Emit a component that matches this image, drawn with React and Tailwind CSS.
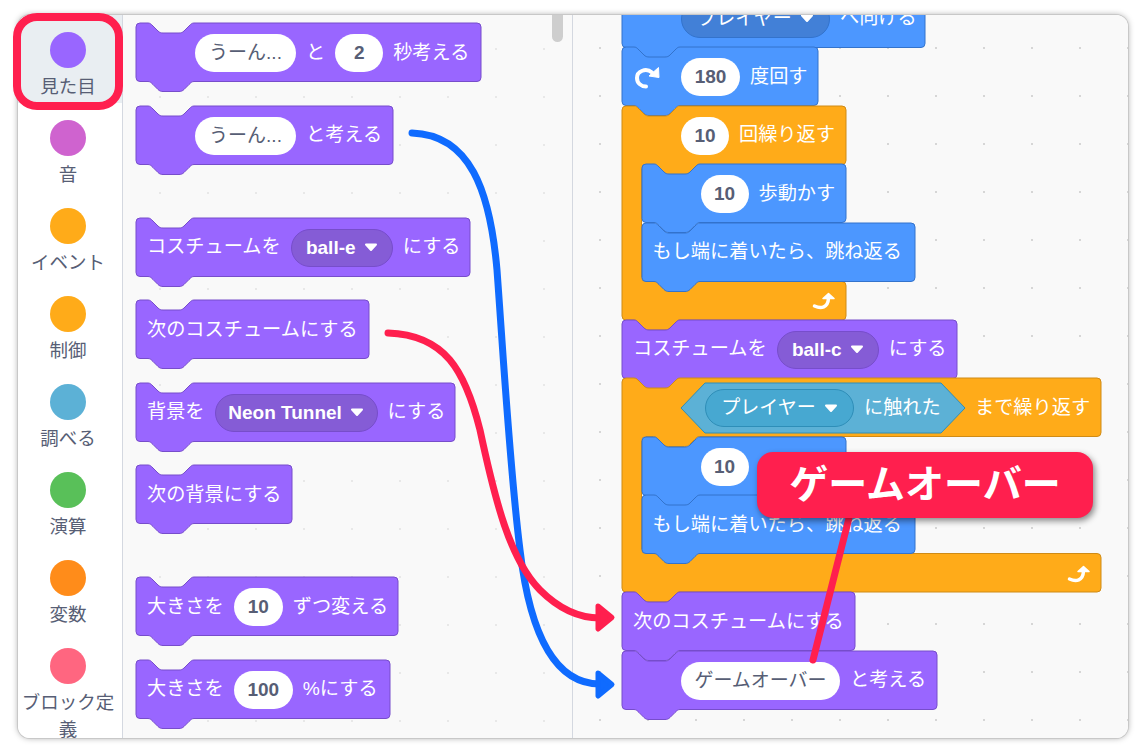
const FONT = 'font-["Liberation_Sans","Noto_Sans_CJK_JP",sans-serif]';

const H = 58.5;
const notch = 'c2 0 3 1 5 3 l5 5 c1.5 1.5 3 2 5 2 h16 c2 0 3.5 -.5 5 -2 l5 -5 c2 -2 3 -3 5 -3';
const bump = 'c-2 0 -3 1 -5 3 l-5 5 c-1.5 1.5 -3 2 -5 2 h-16 c-2 0 -3.5 -.5 -5 -2 l-5 -5 c-2 -2 -3 -3 -5 -3';

const stackPath = (w) =>
  `M0 4 Q0 0 4 0 H12 ${notch} H${w - 4} Q${w} 0 ${w} 4 V${H - 4} Q${w} ${H} ${w - 4} ${H} H58 ${bump} H4 Q0 ${H} 0 ${H - 4} Z`;

const loopPath = (w, inner) => {
  const y2 = H + inner;
  const y3 = y2 + 38.5;
  return `M0 4 Q0 0 4 0 H12 ${notch} H${w - 4} Q${w} 0 ${w} 4 V${H - 4} Q${w} ${H} ${w - 4} ${H} H77.5 ${bump} H23.5 Q19.5 ${H} 19.5 ${H + 4} V${y2 - 4} Q19.5 ${y2} 23.5 ${y2} H${w - 4} Q${w} ${y2} ${w} ${y2 + 4} V${y3 - 4} Q${w} ${y3} ${w - 4} ${y3} H58 ${bump} H4 Q0 ${y3} 0 ${y3 - 4} Z`;
};

function Caret() {
  return (
    <svg width="14" height="9" viewBox="0 0 14 9" className="shrink-0">
      <path d="M2 1.5 H12 L7 7 Z" fill="#fff" stroke="#fff" strokeWidth="2" strokeLinejoin="round" />
    </svg>
  );
}

function Input({ className, bold, children }) {
  return (
    <div className={`h-[38px] shrink-0 rounded-full bg-white flex items-center justify-center text-[19px] text-[#575e75] ${bold ? 'font-bold' : ''} ${className}`}>
      {children}
    </div>
  );
}

function Drop({ className, bold, children }) {
  return (
    <div className={`h-[38px] shrink-0 rounded-full border flex items-center justify-center gap-[8px] text-[19px] text-white ${bold ? 'font-bold' : ''} ${className}`}>
      {children}
      <Caret />
    </div>
  );
}

const purple = { fill: '#9966ff', stroke: '#774dcb' };
const blue = { fill: '#4c97ff', stroke: '#3373cc' };
const orange = { fill: '#ffab19', stroke: '#cf8b17' };

function Block({ w, color, className = 'pl-[11px]', children }) {
  return (
    <div className="grid w-fit">
      <svg width={w} height={H} className="col-start-1 row-start-1 overflow-visible">
        <path d={stackPath(w)} fill={color.fill} stroke={color.stroke} strokeWidth="1" />
      </svg>
      <div className={`col-start-1 row-start-1 flex items-center gap-[10px] pt-[2px] text-[19.2px] text-white whitespace-nowrap ${className}`}>
        {children}
      </div>
    </div>
  );
}

function LoopArrow() {
  return (
    <svg width="24" height="22" viewBox="0 0 24 22">
      <path d="M2.5 15 C9 18 16 17 16.5 7" fill="none" stroke="#fff" strokeWidth="3.5" strokeLinecap="round" />
      <path d="M11 7.5 L16.5 2.5 L22 7.5 Z" fill="#fff" stroke="#fff" strokeWidth="1.5" strokeLinejoin="round" />
    </svg>
  );
}

function TurnIcon() {
  return (
    <svg width="26" height="26" viewBox="0 0 26 26" className="shrink-0">
      <path d="M18 8.5 C12 3.5 3 7 3 14 C3 19 7 22.5 12 22.5" fill="none" stroke="#fff" strokeWidth="4" strokeLinecap="round" />
      <path d="M15 12 L25 13.5 L24.5 3.5 Z" fill="#fff" stroke="#fff" strokeWidth="1" strokeLinejoin="round" />
    </svg>
  );
}

function Loop({ w, inner, footerClass, header, children }) {
  return (
    <div className="grid w-fit">
      <svg width={w} height={H + inner + 38.5} className="col-start-1 row-start-1 overflow-visible">
        <path d={loopPath(w, inner)} fill={orange.fill} stroke={orange.stroke} strokeWidth="1" />
      </svg>
      <div className="col-start-1 row-start-1 flex flex-col">
        <div className="h-[58.5px] flex items-center gap-[10px] pt-[2px] pl-[59px] text-[19.2px] text-white whitespace-nowrap">
          {header}
        </div>
        <div className="pl-[19.5px] flex flex-col">{children}</div>
        <div className={`h-[38.5px] flex items-center justify-end pr-[10px] pt-[4px] ${footerClass}`}>
          <LoopArrow />
        </div>
      </div>
    </div>
  );
}

function Touching() {
  return (
    <div className="grid w-fit shrink-0">
      <svg width="284" height="50" className="col-start-1 row-start-1 overflow-visible">
        <path d="M0 25 L24 0 H260 L284 25 L260 50 H24 Z" fill="#5cb1d6" stroke="#2e8eb8" strokeWidth="1" strokeLinejoin="round" />
      </svg>
      <div className="col-start-1 row-start-1 flex items-center gap-[10px] pl-[24px]">
        <Drop className="w-[149px] bg-[#47a8d1] border-[#2e8eb8]">プレイヤー</Drop>
        <span>に触れた</span>
      </div>
    </div>
  );
}

const categories = [
  { label: '見た目', color: 'bg-[#9966ff]', active: true },
  { label: '音', color: 'bg-[#cf63cf]' },
  { label: 'イベント', color: 'bg-[#ffab19]' },
  { label: '制御', color: 'bg-[#ffab19]' },
  { label: '調べる', color: 'bg-[#5cb1d6]' },
  { label: '演算', color: 'bg-[#59c059]' },
  { label: '変数', color: 'bg-[#ff8c1a]' },
  { label: 'ブロック定義', color: 'bg-[#ff6680]' },
];

export default function App() {
  return (
    <div className={`relative w-[1140px] h-[749px] overflow-hidden bg-white pt-[15px] pl-[18px] ${FONT}`}>
      <div className="flex w-[1110px] h-[723px] overflow-hidden rounded-[12px] bg-white shadow-[0_0_0_1px_#c8c8c8,0_0_6px_rgba(0,0,0,0.35)]">
        {/* category sidebar */}
        <div className="w-[105px] shrink-0 border-r border-[#d4d8e0] bg-white">
          {categories.map((c) => (
            <div key={c.label} className={`h-[88px] flex flex-col items-center pt-[17px] pr-[4px] ${c.active ? 'bg-[#e9eef2]' : ''}`}>
              <div className={`w-[36px] h-[36px] shrink-0 rounded-full ${c.color}`} />
              <div className="mt-[5px] text-center text-[18.5px] leading-[27px] text-[#575e75]">{c.label}</div>
            </div>
          ))}
        </div>

        {/* block palette */}
        <div className="relative w-[450px] shrink-0 border-r border-[#d4d8e0] bg-[#f9f9f9] bg-[radial-gradient(circle,#e8e8e8_1px,transparent_1.5px)] bg-[size:48px_48px] bg-[position:13px_10px] pl-[13px] pt-[8px]">
          <div className="absolute left-[429px] top-0 w-[11px] h-[27px] rounded-b-[6px] bg-[#cecece]" />
          <Block w={345} color={purple} className="pl-[59px]">
            <Input className="w-[101px]">うーん...</Input>
            <span>と</span>
            <Input bold className="w-[48px]">2</Input>
            <span>秒考える</span>
          </Block>
          <div className="h-[24px]" />
          <Block w={257} color={purple} className="pl-[59px]">
            <Input className="w-[101px]">うーん...</Input>
            <span>と考える</span>
          </Block>
          <div className="h-[53.5px]" />
          <Block w={334} color={purple}>
            <span>コスチュームを</span>
            <Drop bold className="w-[102px] bg-[#855cd6] border-[#774dcb]">ball-e</Drop>
            <span>にする</span>
          </Block>
          <div className="h-[24px]" />
          <Block w={233} color={purple}>
            <span>次のコスチュームにする</span>
          </Block>
          <div className="h-[24px]" />
          <Block w={319} color={purple}>
            <span>背景を</span>
            <Drop bold className="w-[163px] bg-[#855cd6] border-[#774dcb]">Neon Tunnel</Drop>
            <span>にする</span>
          </Block>
          <div className="h-[24px]" />
          <Block w={156} color={purple}>
            <span>次の背景にする</span>
          </Block>
          <div className="h-[53.5px]" />
          <Block w={262} color={purple}>
            <span>大きさを</span>
            <Input bold className="w-[49px]">10</Input>
            <span>ずつ変える</span>
          </Block>
          <div className="h-[24px]" />
          <Block w={254} color={purple}>
            <span>大きさを</span>
            <Input bold className="w-[59px]">100</Input>
            <span>%にする</span>
          </Block>
        </div>

        {/* code area */}
        <div className="flex-1 overflow-hidden bg-[#f9f9f9] bg-[radial-gradient(circle,#d6d6d6_1px,transparent_1.5px)] bg-[size:48px_48px] bg-[position:3px_9px] pl-[49px]">
          <div className="-mt-[26.5px]">
            <Block w={303} color={blue} className="pl-[59px]">
              <Drop className="w-[149px] bg-[#4280d7] border-[#3373cc]">プレイヤー</Drop>
              <span>へ向ける</span>
            </Block>
            <Block w={196} color={blue} className="pl-[12px]">
              <TurnIcon />
              <Input bold className="w-[59px] ml-[11px]">180</Input>
              <span>度回す</span>
            </Block>
            <Loop
              w={224}
              inner={117}
              footerClass="w-[224px]"
              header={
                <>
                  <Input bold className="w-[48px]">10</Input>
                  <span>回繰り返す</span>
                </>
              }
            >
              <Block w={204} color={blue} className="pl-[59px]">
                <Input bold className="w-[48px]">10</Input>
                <span>歩動かす</span>
              </Block>
              <Block w={273} color={blue}>
                <span>もし端に着いたら、跳ね返る</span>
              </Block>
            </Loop>
            <Block w={335} color={purple}>
              <span>コスチュームを</span>
              <Drop bold className="w-[102px] bg-[#855cd6] border-[#774dcb]">ball-c</Drop>
              <span>にする</span>
            </Block>
            <Loop
              w={479}
              inner={117}
              footerClass="w-[479px]"
              header={
                <>
                  <Touching />
                  <span>まで繰り返す</span>
                </>
              }
            >
              <Block w={204} color={blue} className="pl-[59px]">
                <Input bold className="w-[48px]">10</Input>
                <span>歩動かす</span>
              </Block>
              <Block w={273} color={blue}>
                <span>もし端に着いたら、跳ね返る</span>
              </Block>
            </Loop>
            <Block w={233} color={purple}>
              <span>次のコスチュームにする</span>
            </Block>
            <Block w={315} color={purple} className="pl-[59px]">
              <Input className="w-[159px]">ゲームオーバー</Input>
              <span>と考える</span>
            </Block>
          </div>
        </div>
      </div>

      {/* annotation lines and arrows */}
      <svg width="1140" height="749" className="absolute left-0 top-0 pointer-events-none">
        <path d="M412 133 C470 135 490 190 497 270 C505 380 510 470 520 550 C530 635 555 684 600 684" fill="none" stroke="#0f6bff" strokeWidth="7" strokeLinecap="round" />
        <path d="M598 673 L612 684.5 L598 696 Z" fill="#0f6bff" stroke="#0f6bff" strokeWidth="5" strokeLinejoin="round" />
        <path d="M388 333 C445 335 465 370 480 430 C495 500 510 560 540 590 C560 610 580 618 600 618" fill="none" stroke="#ff1f4e" strokeWidth="7" strokeLinecap="round" />
        <path d="M598 606 L612 617.5 L598 629 Z" fill="#ff1f4e" stroke="#ff1f4e" strokeWidth="5" strokeLinejoin="round" />
        <path d="M851 510 L813 660" fill="none" stroke="#ff1f4e" strokeWidth="7" strokeLinecap="round" />
      </svg>

      {/* highlight around the selected category */}
      <div className="absolute left-[13px] top-[13px] w-[110px] h-[97px] rounded-[24px] border-[8px] border-[#ff1f4e]" />

      {/* callout */}
      <div className="absolute left-[757px] top-[452px] w-[336px] h-[66px] rounded-[16px] bg-[#ff1f4e] shadow-[2px_3px_6px_rgba(0,0,0,0.45)] flex items-center justify-center text-[39px] font-bold text-white">
        ゲームオーバー
      </div>
    </div>
  );
}
